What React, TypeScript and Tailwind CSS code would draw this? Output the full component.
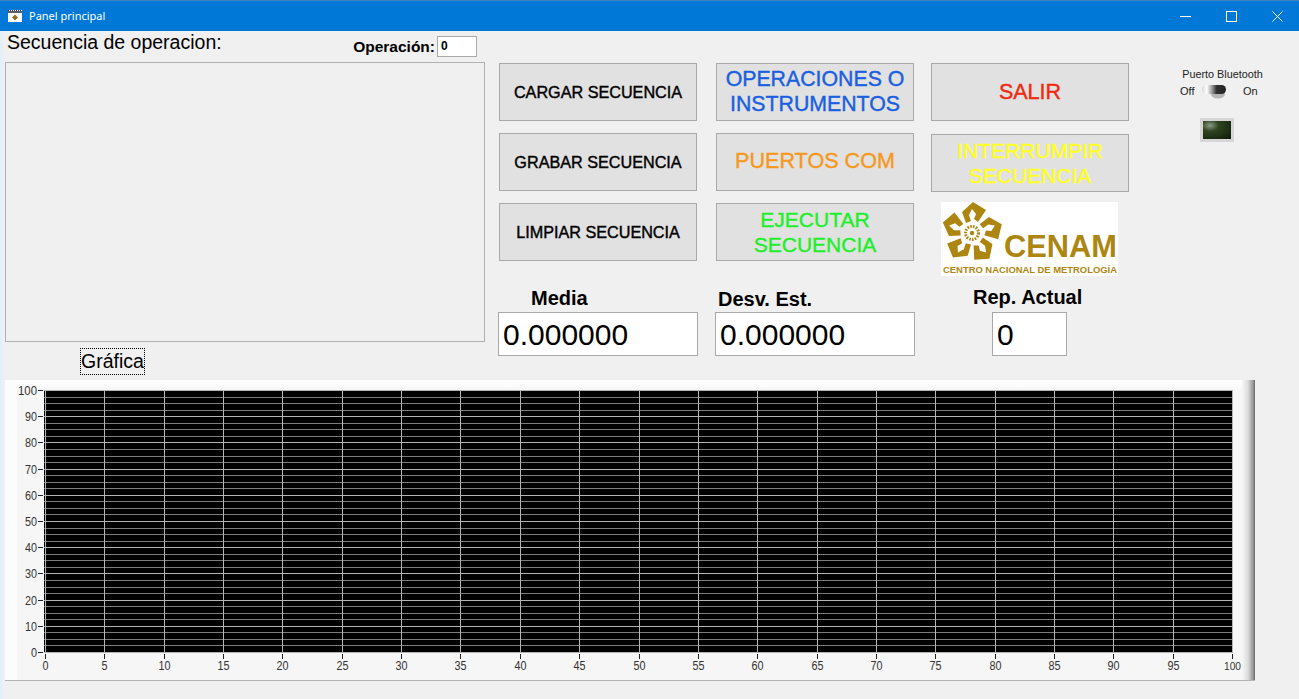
const xTicks = Array.from({ length: 21 }, (_, i) => i * 5)
const yTicks = Array.from({ length: 11 }, (_, i) => i * 10)
const minorY = Array.from({ length: 41 }, (_, i) => i * 2.5)

const plotX = (v: number) => Math.round(40 + v * 11.87) + 0.5
const plotY = (v: number) => Math.round(272 - v * 2.62) + 0.5

function ActionButton({ className, label }: { className: string; label: string }) {
  return (
    <button className={`w-[198px] h-[58px] shrink-0 flex items-center justify-center text-center border border-[#a9a9a9] bg-[#e1e1e1] leading-[25px] [-webkit-text-stroke:0.4px] ${className}`}>
      {label}
    </button>
  )
}

function Chart() {
  return (
    <svg width="1237" height="300" className="block shrink-0">
      <defs>
        <linearGradient id="panelTop" x1="0" x2="0" y1="0" y2="1">
          <stop offset="0" stopColor="#ffffff" />
          <stop offset="1" stopColor="#f7f7f7" />
        </linearGradient>
      </defs>
      <rect x="0" y="0" width="1237" height="300" fill="#f6f6f6" />
      <rect x="0" y="0" width="1237" height="10" fill="url(#panelTop)" />
      <rect x="0" y="0" width="12" height="300" fill="#fcfcfc" />
      <rect x="39" y="10" width="1189" height="263" fill="#000000" />
      {minorY.map((v) => (
        <line key={v} x1="39" x2="1228" y1={plotY(v)} y2={plotY(v)} stroke={v % 10 === 0 ? '#b4b4b4' : '#7c7c7c'} strokeWidth="1" />
      ))}
      {xTicks.map((v) => (
        <line key={v} x1={plotX(v)} x2={plotX(v)} y1="10" y2="273" stroke="#b4b4b4" strokeWidth="1" />
      ))}
      {yTicks.map((v) => (
        <g key={v}>
          <line x1="33" x2="38" y1={plotY(v)} y2={plotY(v)} stroke="#222222" />
          <text x="32" y={plotY(v) + 4} textAnchor="end" fontSize="12" fill="#333333" fontFamily="'Liberation Sans', sans-serif" textLength={v === 100 ? 19 : v === 0 ? 6 : 12} lengthAdjust="spacingAndGlyphs">
            {v}
          </text>
        </g>
      ))}
      {xTicks.map((v) => (
        <g key={v}>
          <line x1={plotX(v)} x2={plotX(v)} y1="274" y2="279" stroke="#222222" />
          <text x={plotX(v)} y="290" textAnchor="middle" fontSize={v === 100 ? 11 : 12} fill="#333333" fontFamily="'Liberation Sans', sans-serif" textLength={v === 100 ? 17 : v < 10 ? 6 : 12} lengthAdjust="spacingAndGlyphs">
            {v}
          </text>
        </g>
      ))}
    </svg>
  )
}

function CenamLogo() {
  return (
    <div className="w-[177px] h-[74px] -mt-[1px] ml-[10px] bg-white">
      <svg width="177" height="74" className="block">
        <g transform="translate(31 31)" fill="#ad8612">
          {[0, 72, 144, 216, 288].map((a) => (
            <polygon key={a} transform={`rotate(${a})`} points="-6,-10 -10,-21 1,-31 14,-23 6,-11 2,-14 4,-19 0,-24 -3,-18 -1,-12" />
          ))}
          <circle r="6.5" fill="none" stroke="#ad8612" strokeWidth="3" strokeDasharray="1.6 1.2" />
          <circle r="2.2" />
        </g>
        <text x="63" y="55" fontSize="31" fontWeight="700" fill="#ad8612" fontFamily="'Liberation Sans', sans-serif" textLength="113" lengthAdjust="spacingAndGlyphs">
          CENAM
        </text>
        <text x="2" y="71" fontSize="9" fontWeight="700" fill="#ad8612" fontFamily="'Liberation Sans', sans-serif" textLength="174" lengthAdjust="spacingAndGlyphs">
          CENTRO NACIONAL DE METROLOGÍA
        </text>
      </svg>
    </div>
  )
}

function Stat({ label, value, className, labelClass }: { label: string; value: string; className: string; labelClass: string }) {
  return (
    <div className="flex flex-col">
      <div className={`h-[36px] flex items-end text-[20px] font-bold text-black leading-[24px] ${labelClass}`}>{label}</div>
      <div className={`h-[44px] flex items-center pl-[4px] bg-white border border-[#a9a9a9] text-[30px] text-black ${className}`}>{value}</div>
    </div>
  )
}

export default function App() {
  return (
    <div className="relative w-screen h-screen overflow-hidden bg-[#f0f0f0] font-['Liberation_Sans',sans-serif]">
      {/* Title bar */}
      <div className="h-[31px] flex items-center bg-[#0078d7] border-t border-[#3d7fb8] text-white">
        <svg width="14" height="14" viewBox="0 0 14 14" className="ml-[8px] shrink-0">
          <rect x="0" y="1" width="14" height="12" fill="#ffffff" />
          <line x1="0" x2="14" y1="1.5" y2="1.5" stroke="#33383f" strokeDasharray="1 1" />
          <rect x="0" y="2" width="14" height="2" fill="#5a6068" />
          <polygon points="7,5.5 10,8.5 7,11.5 4,8.5" fill="#8a7420" />
        </svg>
        <span className="ml-[7px] text-[11px] font-['Noto_Sans',sans-serif]">Panel principal</span>
        <div className="ml-auto flex -mr-[1px]">
          <div className="w-[46px] h-[30px] flex items-center justify-center">
            <svg width="11" height="11"><line x1="0" x2="11" y1="5.5" y2="5.5" stroke="#ffffff" /></svg>
          </div>
          <div className="w-[46px] h-[30px] flex items-center justify-center">
            <svg width="11" height="11"><rect x="0.5" y="0.5" width="10" height="10" fill="none" stroke="#ffffff" /></svg>
          </div>
          <div className="w-[46px] h-[30px] flex items-center justify-center">
            <svg width="11" height="11"><path d="M0.5 0.5 L10.5 10.5 M10.5 0.5 L0.5 10.5" stroke="#ffffff" /></svg>
          </div>
        </div>
      </div>

      <div className="flex h-[349px]">
        {/* Sequence list */}
        <div className="w-[480px] ml-[5px] shrink-0">
          <div className="h-[31px] flex justify-between pr-[8px]">
            <span className="ml-[2px] text-[19.5px] leading-[23px] text-black">Secuencia de operacion:</span>
            <div className="flex items-start mt-[5px]">
              <span className="text-[15.5px] font-bold leading-[21px] text-black mr-[2px]">Operación:</span>
              <div className="w-[40px] h-[21px] bg-white border border-[#a9a9a9] pl-[3px] text-[12px] font-bold leading-[19px] text-black">0</div>
            </div>
          </div>
          <div className="h-[280px] border border-[#b0b0b0] bg-[#f0f0f0]" />
          <div className="ml-[75px] mt-[6px] w-[65px] h-[27px] flex items-center justify-center pt-[1px] border border-dotted border-black text-[19.5px] text-black">
            Gráfica
          </div>
        </div>

        {/* Buttons and readouts */}
        <div className="ml-[14px] pt-[32px] w-[630px] shrink-0">
          <div className="flex">
            <div className="flex flex-col gap-[12px]">
              <ActionButton className="text-[16.2px] text-black" label="CARGAR SECUENCIA" />
              <ActionButton className="text-[16.2px] text-black" label="GRABAR SECUENCIA" />
              <ActionButton className="text-[16.2px] text-black" label="LIMPIAR SECUENCIA" />
            </div>
            <div className="ml-[19px] flex flex-col gap-[12px]">
              <ActionButton className="text-[21.3px] text-[#1a5fe0]" label="OPERACIONES O INSTRUMENTOS" />
              <ActionButton className="pb-[3px] text-[21.6px] text-[#f7981e]" label="PUERTOS COM" />
              <ActionButton className="text-[21px] text-[#1fee2a]" label="EJECUTAR SECUENCIA" />
            </div>
            <div className="ml-[17px] flex flex-col">
              <ActionButton className="text-[21.5px] text-[#ee2a10]" label="SALIR" />
              <ActionButton className="mt-[13px] text-[21px] text-[#ffff22]" label="INTERRUMPIR SECUENCIA" />
              <div className="mt-[11px]">
                <CenamLogo />
              </div>
            </div>
          </div>
          <div className="flex -ml-[1px]">
            <Stat label="Media" value="0.000000" className="w-[200px]" labelClass="pl-[33px] pb-[2px]" />
            <div className="ml-[17px]">
              <Stat label="Desv. Est." value="0.000000" className="w-[200px]" labelClass="pl-[3px] pb-[1px]" />
            </div>
            <div className="ml-[77px]">
              <Stat label="Rep. Actual" value="0" className="w-[75px]" labelClass="-ml-[19px] pb-[3px] whitespace-nowrap" />
            </div>
          </div>
        </div>

        {/* Bluetooth */}
        <div className="ml-[48px] w-[90px] shrink-0 flex flex-col items-center pt-[36px] text-[11px] text-[#222222]">
          <span className="leading-[14px] text-[10.8px] pl-[1px]">Puerto Bluetooth</span>
          <div className="mt-[1px] flex items-center w-full pl-[3px]">
            <span className="w-[14px] leading-[14px]">Off</span>
            <svg width="26" height="18" className="ml-[7px]">
              <defs>
                <linearGradient id="tog" x1="0" x2="1" y1="0" y2="0">
                  <stop offset="0" stopColor="#d8d8d8" />
                  <stop offset="0.2" stopColor="#ffffff" />
                  <stop offset="0.45" stopColor="#8a8a8a" />
                  <stop offset="0.6" stopColor="#333333" />
                  <stop offset="1" stopColor="#222222" />
                </linearGradient>
              </defs>
              <ellipse cx="17" cy="12" rx="7" ry="4.5" fill="#b5b5b5" />
              <rect x="1" y="3" width="24" height="9" rx="4.5" fill="url(#tog)" />
            </svg>
            <span className="ml-[16px] leading-[14px]">On</span>
          </div>
          <div className="mt-[18px] -ml-[10px] w-[34px] h-[24px] bg-[#d6d6d6] p-[3px]">
            <div className="w-full h-full bg-[radial-gradient(ellipse_at_25%_25%,#8d9c86_0%,#2f4420_30%,#0e1a08_100%)]" />
          </div>
        </div>
      </div>

      {/* Graph */}
      <div className="ml-[5px] w-[1250px] h-[301px] flex border-b-2 border-[#b4b4b4]">
        <Chart />
        <div className="w-[13px] h-[300px] bg-gradient-to-r from-[#f7f7f7] via-[#dcdcdc] to-[#8a8a8a] border-r border-[#707070]" />
      </div>

      {/* Window edge glow */}
      <div className="absolute left-0 top-[31px] bottom-0 w-[4px] bg-gradient-to-r from-[#dff1fb] to-[#f0f0f0]" />
    </div>
  )
}
